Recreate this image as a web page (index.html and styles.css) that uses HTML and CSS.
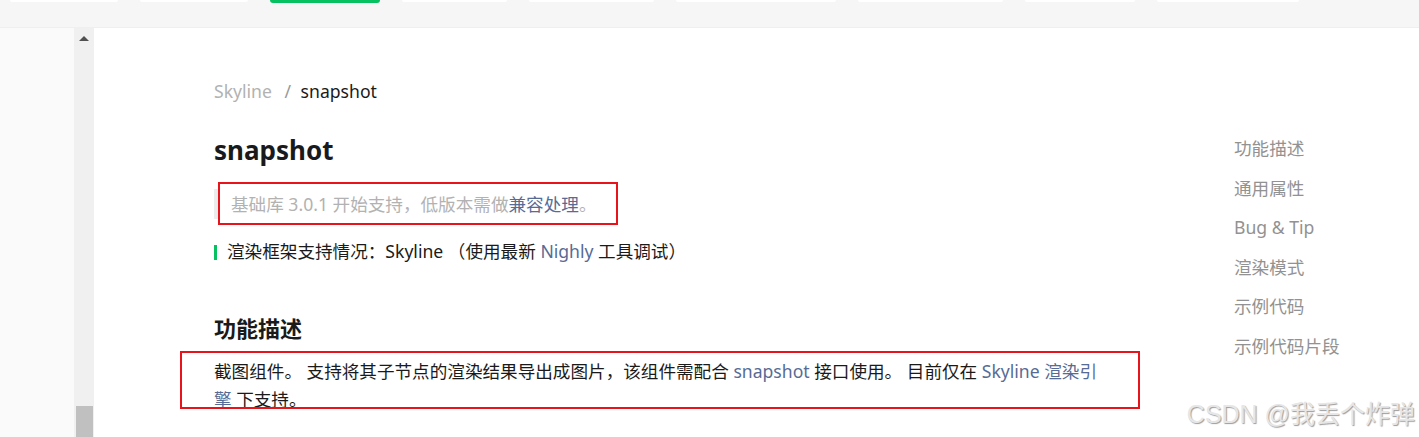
FILE: index.html
```html
<!DOCTYPE html>
<html lang="zh-CN">
<head>
    <meta charset="UTF-8">
    <meta name="viewport" content="width=device-width, initial-scale=1.0">
    <title>snapshot | Skyline</title>
    <link rel="stylesheet" href="styles.css">
</head>
<body>
    <div class="topbar">
        <span class="tab" style="width: 108px"></span>
        <span class="tab" style="width: 108px"></span>
        <span class="tab tab-active" style="width: 110px"></span>
        <span class="tab" style="width: 105px"></span>
        <span class="tab" style="width: 125px"></span>
        <span class="tab" style="width: 160px"></span>
        <span class="tab" style="width: 145px"></span>
        <span class="tab" style="width: 110px"></span>
        <span class="tab" style="width: 142px"></span>
    </div>

    <div class="page">
        <aside class="sidebar"></aside>
        <div class="scrollbar">
            <span class="scroll-arrow"></span>
            <span class="scroll-thumb"></span>
        </div>

        <main class="main">
            <article class="article">
                <div class="breadcrumb">
                    <span class="crumb-parent">Skyline</span>
                    <span class="crumb-sep">/</span>
                    <span class="crumb-current">snapshot</span>
                </div>

                <h1 class="title">snapshot</h1>

                <div class="notice">
                    基础库 3.0.1 开始支持，低版本需做<a href="#">兼容处理</a>。
                </div>

                <p class="renderer">
                    <span class="renderer-bar"></span>渲染框架支持情况：Skyline （使用最新 <a href="#">Nighly</a> 工具调试）
                </p>

                <h2 class="section-title">功能描述</h2>
                <p class="desc">
                    截图组件。 支持将其子节点的渲染结果导出成图片，该组件需配合 <a href="#">snapshot</a> 接口使用。 目前仅在 <a href="#">Skyline 渲染引擎</a> 下支持。
                </p>
            </article>

            <nav class="toc">
                <a href="#">功能描述</a>
                <a href="#">通用属性</a>
                <a href="#">Bug &amp; Tip</a>
                <a href="#">渲染模式</a>
                <a href="#">示例代码</a>
                <a href="#">示例代码片段</a>
            </nav>
        </main>
    </div>

    <!-- annotation boxes from the screenshot -->
    <div class="mark mark-notice"></div>
    <div class="mark mark-desc"></div>

    <div class="watermark">CSDN @我丢个炸弹</div>
</body>
</html>
```

FILE: styles.css
```css
* {
    margin: 0;
    padding: 0;
    box-sizing: border-box;
}

html, body {
    height: 100%;
    overflow: hidden;
}

body {
    font-family: 'Noto Sans', 'Noto Sans CJK SC', sans-serif;
    font-size: 17.6px;
    color: #1a1a1a;
    background: #fff;
    position: relative;
}

a {
    color: #576b95;
    text-decoration: none;
}

/* top tab strip */
.topbar {
    height: 28px;
    background: #f6f6f6;
    border-bottom: 1px solid #efefef;
    display: flex;
    gap: 22px;
    padding-left: 10px;
}

.tab {
    height: 2px;
    background: #fff;
    border-radius: 0 0 4px 4px;
}

.tab-active {
    height: 3px;
    background: #07c160;
}

/* page body */
.page {
    display: flex;
    height: calc(100% - 28px);
}

.sidebar {
    width: 74px;
    background: #fafafa;
}

.scrollbar {
    width: 20px;
    background: #f0f0f0;
    display: flex;
    flex-direction: column;
    align-items: center;
    justify-content: space-between;
    padding: 8px 0 0;
}

.scroll-arrow {
    width: 0;
    height: 0;
    border-left: 5px solid transparent;
    border-right: 5px solid transparent;
    border-bottom: 5px solid #505050;
}

.scroll-thumb {
    width: 17px;
    height: 31px;
    background: #c0c0c0;
}

.main {
    flex: 1;
    display: flex;
}

.article {
    width: 1140px;
    padding: 49px 0 0 120px;
}

.breadcrumb {
    line-height: 28px;
}

.crumb-parent {
    color: #b2b2b2;
}

.crumb-sep {
    color: #999;
    margin: 0 5px 0 8px;
}

.title {
    font-size: 26px;
    font-weight: 700;
    line-height: 36px;
    margin-top: 27px;
}

.notice {
    margin-top: 21px;
    border-left: 4px solid #ececec;
    padding-left: 13px;
    line-height: 30px;
    color: #b2b2b2;
}

.renderer {
    margin-top: 18px;
    line-height: 28px;
}

.renderer-bar {
    display: inline-block;
    width: 3px;
    height: 15px;
    background: #07c160;
    margin-right: 10px;
    vertical-align: -2px;
}

.section-title {
    font-size: 22px;
    font-weight: 700;
    line-height: 32px;
    margin-top: 47px;
}

.desc {
    margin-top: 13px;
    line-height: 28px;
    max-width: 900px;
}

/* right side table of contents */
.toc {
    display: flex;
    flex-direction: column;
    padding-top: 101px;
}

.toc a {
    color: #929292;
    line-height: 39.5px;
}

/* red annotation boxes drawn on top of the page */
.mark {
    position: absolute;
    border: 2px solid #e8141b;
}

.mark-notice {
    left: 218px;
    top: 182px;
    width: 400px;
    height: 43px;
}

.mark-desc {
    left: 180px;
    top: 351px;
    width: 960px;
    height: 58px;
}

.watermark {
    position: absolute;
    right: 4px;
    top: 394px;
    font-family: 'Liberation Sans', 'Noto Sans CJK SC', sans-serif;
    font-size: 25px;
    color: #e6e6e6;
    text-shadow: 1px 1px 1px #9c9c9c;
}
```
